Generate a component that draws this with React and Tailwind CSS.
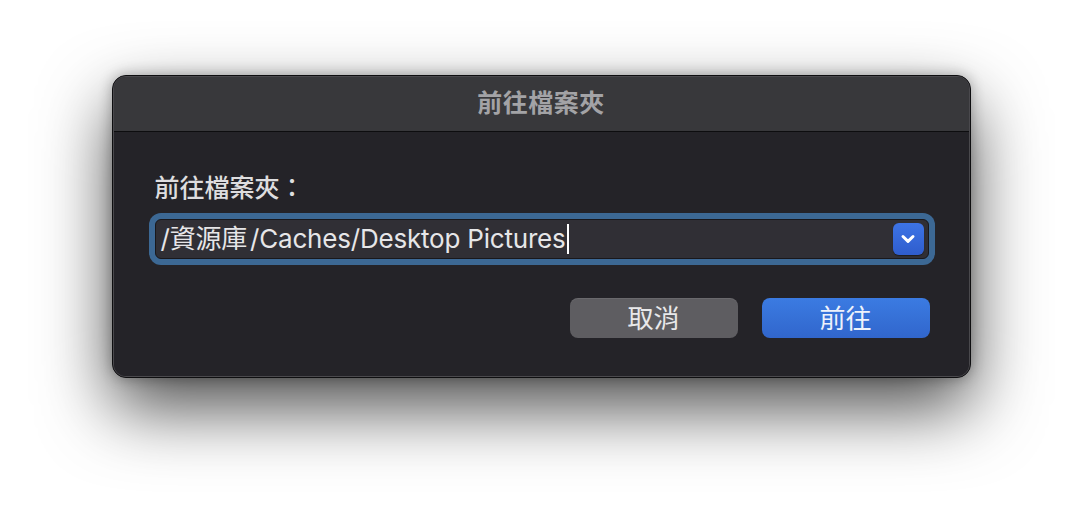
import React from "react";

const font = { fontFamily: '"Inter", "Noto Sans CJK TC", sans-serif' };

function Chevron() {
  return (
    <svg width="16" height="12" viewBox="0 0 16 12" fill="none">
      <path
        d="M3 3.5 L8 8.3 L13 3.5"
        stroke="white"
        strokeWidth="3"
        strokeLinecap="round"
        strokeLinejoin="round"
      />
    </svg>
  );
}

export default function App() {
  return (
    <div
      className="w-full h-[526px] bg-white flex justify-center pt-[75px]"
      style={font}
    >
      <div className="w-[859px] h-[303px] rounded-[14px] border border-[#0e0e10] shadow-[0_30px_70px_rgba(0,0,0,0.7),0_0_14px_rgba(0,0,0,0.3)] bg-[#242328]">
        <div className="h-full rounded-[13px] border border-[#4a494d] overflow-hidden flex flex-col">
          {/* title bar */}
          <div className="h-[55px] shrink-0 bg-[#38383b] border-b border-[#0d0d0f] flex items-center justify-center">
            <span className="text-[25px] font-bold text-[#a3a3a6] tracking-[0.5px]">
              前往檔案夾
            </span>
          </div>

          <div className="flex-1 bg-[#242328] pl-[41px] pr-[39px] pt-[41px] flex flex-col">
            <div className="text-[25px] leading-[30px] font-medium text-[#dedddf]">
              前往檔案夾：
            </div>

            <div className="mt-[16px] mr-[1px] h-[40px] rounded-[6px] bg-[#302f35] border border-[#19181c] shadow-[0_0_0_6px_#3c6894] flex items-center pl-[5px] pr-[4px]">
              <span className="text-[26px] leading-none text-[#e6e6e8] tracking-[-0.2px]">
                /資源庫<span className="ml-[3px]">/Caches/Desktop Pictures</span>
              </span>
              <span className="ml-[1px] w-[2px] h-[30px] bg-white" />
              <div className="ml-auto w-[31px] h-[32px] rounded-[6px] bg-gradient-to-b from-[#3d74e6] to-[#2f5dcd] flex items-center justify-center shadow-[0_1px_1px_rgba(0,0,0,0.4)]">
                <Chevron />
              </div>
            </div>

            <div className="mt-[39px] flex justify-end gap-[24px]">
              <button className="w-[168px] h-[40px] rounded-[8px] bg-[#5e5d61] text-[26px] text-[#e8e8ea] flex items-center justify-center shadow-[inset_0_1px_0_rgba(255,255,255,0.08)]">
                取消
              </button>
              <button className="w-[168px] h-[40px] rounded-[8px] bg-gradient-to-b from-[#3b7be2] to-[#3166cc] text-[26px] text-[#eef2fb] flex items-center justify-center">
                前往
              </button>
            </div>
          </div>
        </div>
      </div>
    </div>
  );
}
